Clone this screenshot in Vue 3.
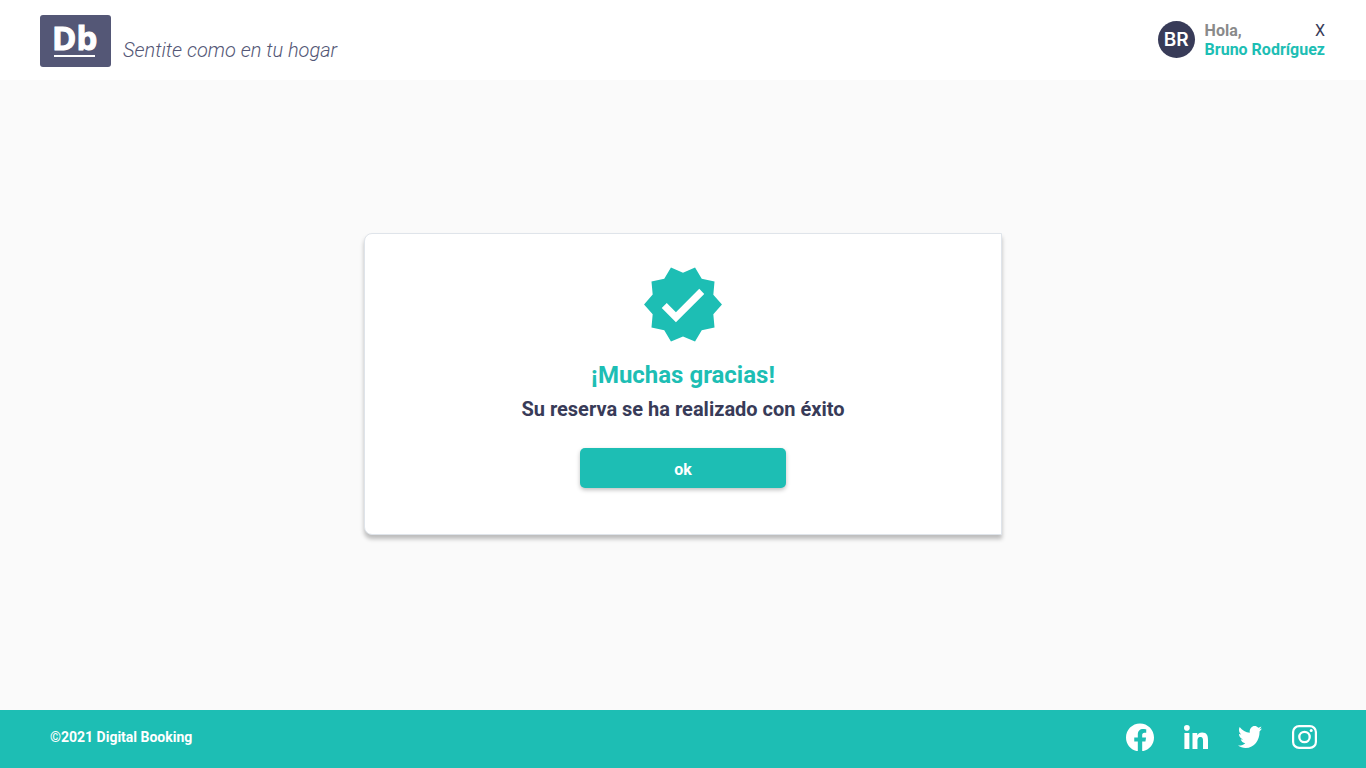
<script setup>
const user = { name: 'Bruno Rodríguez', initials: 'BR' }
</script>

<template>
  <div class="page">
    <header class="header">
      <a class="brand" href="#">
        <svg class="logo" viewBox="0 0 71 52" role="img" aria-label="Digital Booking">
          <rect width="71" height="52" rx="3" fill="#545776" />
          <text x="12" y="35" class="logo-text">Db</text>
          <rect x="14" y="40" width="41" height="2" fill="#fff" />
        </svg>
        <span class="slogan">Sentite como en tu hogar</span>
      </a>
      <div class="user">
        <span class="avatar">{{ user.initials }}</span>
        <div class="greeting">
          <div class="greeting-row">
            <span class="hello">Hola,</span>
            <button class="logout" type="button" aria-label="Cerrar sesión">X</button>
          </div>
          <span class="name">{{ user.name }}</span>
        </div>
      </div>
    </header>

    <main class="main">
      <section class="card">
        <svg class="badge" viewBox="0 0 24 24" aria-hidden="true">
          <path d="M23 12l-2.44-2.78.34-3.68-3.61-.82-1.89-3.18L12 3 8.6 1.54 6.71 4.72l-3.61.81.34 3.68L1 12l2.44 2.78-.34 3.69 3.61.82 1.89 3.18L12 21l3.4 1.46 1.89-3.18 3.61-.82-.34-3.68L23 12zm-13 5l-4-4 1.41-1.41L10 14.17l6.59-6.59L18 9l-8 8z" />
        </svg>
        <h1 class="title">¡Muchas gracias!</h1>
        <p class="message">Su reserva se ha realizado con éxito</p>
        <button class="ok" type="button">ok</button>
      </section>
    </main>

    <footer class="footer">
      <span class="copyright">©2021 Digital Booking</span>
      <nav class="social" aria-label="Redes sociales">
        <a href="#" aria-label="Facebook">
          <svg width="28" height="28" viewBox="8 0 496 496">
            <path d="M504 256C504 119 393 8 256 8S8 119 8 256c0 123.78 90.69 226.38 209.25 245V327.69h-63V256h63v-54.64c0-62.15 37-96.48 93.67-96.48 27.14 0 55.52 4.84 55.52 4.84v61h-31.28c-30.8 0-40.41 19.12-40.41 38.73V256h68.78l-11 71.69h-57.78V501C413.31 482.38 504 379.78 504 256z" />
          </svg>
        </a>
        <a href="#" aria-label="LinkedIn">
          <svg width="24" height="24" viewBox="0 0 448 448">
            <path d="M100.28 448H7.4V148.9h92.88zM53.79 108.1C24.09 108.1 0 83.5 0 53.8a53.79 53.79 0 0 1 107.58 0c0 29.7-24.1 54.3-53.79 54.3zM447.9 448h-92.68V302.4c0-34.7-.7-79.2-48.29-79.2-48.29 0-55.69 37.7-55.69 76.7V448h-92.78V148.9h89.08v40.8h1.3c12.4-23.5 42.69-48.3 87.88-48.3 94 0 111.28 61.9 111.28 142.3V448z" />
          </svg>
        </a>
        <a href="#" aria-label="Twitter">
          <svg width="24" height="22" viewBox="0 48 512 416" preserveAspectRatio="none">
            <path d="M459.37 151.716c.325 4.548.325 9.097.325 13.645 0 138.72-105.583 298.558-298.558 298.558-59.452 0-114.68-17.219-161.137-47.106 8.447.974 16.568 1.299 25.34 1.299 49.055 0 94.213-16.568 130.274-44.832-46.132-.975-84.792-31.188-98.112-72.772 6.498.974 12.995 1.624 19.818 1.624 9.421 0 18.843-1.3 27.614-3.573-48.081-9.747-84.143-51.98-84.143-102.985v-1.299c13.969 7.797 30.214 12.67 47.431 13.319-28.264-18.843-46.781-51.005-46.781-87.391 0-19.492 5.197-37.36 14.294-52.954 51.655 63.675 129.3 105.258 216.365 109.807-1.624-7.797-2.599-15.918-2.599-24.04 0-57.828 46.782-104.934 104.934-104.934 30.213 0 57.502 12.67 76.67 33.137 23.715-4.548 46.456-13.32 66.599-25.34-7.798 24.366-24.366 44.833-46.132 57.827 21.117-2.273 41.584-8.122 60.426-16.243-14.292 20.791-32.161 39.308-52.628 54.253z" />
          </svg>
        </a>
        <a href="#" aria-label="Instagram">
          <svg width="25" height="24" viewBox="0 0 25 24">
            <rect x="1.1" y="1.1" width="22.8" height="21.8" rx="6" fill="none" stroke="#fff" stroke-width="2.2" />
            <circle cx="12.5" cy="12" r="5.2" fill="none" stroke="#fff" stroke-width="2.3" />
            <circle cx="19.2" cy="5.6" r="1.5" />
          </svg>
        </a>
      </nav>
    </footer>
  </div>
</template>

<style>
body {
  margin: 0;
}
</style>

<style scoped>
.page {
  display: flex;
  flex-direction: column;
  min-height: 100vh;
  background: #fafafa;
  color: #383b58;
  font-family: Roboto, "Liberation Sans", sans-serif;
}

button {
  padding: 0;
  border: 0;
  font-family: inherit;
  cursor: pointer;
}

.header {
  display: flex;
  justify-content: space-between;
  box-sizing: border-box;
  height: 80px;
  padding: 15px 41px 0 40px;
  background: #fff;
}

.brand {
  display: flex;
  align-items: flex-start;
  gap: 12px;
  color: #545776;
  text-decoration: none;
}

.logo {
  width: 71px;
  height: 52px;
}

.logo-text {
  fill: #fff;
  stroke: #fff;
  stroke-width: 1px;
  font: 700 33px "Open Sans", sans-serif;
}

.slogan {
  padding-top: 23px;
  font-size: 20px;
  font-style: italic;
  font-weight: 300;
  line-height: 24px;
}

.user {
  display: flex;
  align-items: flex-start;
  gap: 10px;
  padding-top: 6px;
}

.avatar {
  width: 37px;
  height: 37px;
  border-radius: 50%;
  background: #383b58;
  color: #fff;
  font-family: Inter, "Liberation Sans", sans-serif;
  font-size: 19px;
  font-weight: 600;
  line-height: 37px;
  text-align: center;
}

.greeting {
  display: flex;
  flex-direction: column;
  font-size: 16px;
  line-height: 19px;
}

.greeting-row {
  display: flex;
  justify-content: space-between;
}

.hello {
  color: #8a8a8a;
  font-weight: 700;
}

.logout {
  background: none;
  color: #383b58;
  font-size: 16px;
  font-weight: 400;
  line-height: 19px;
}

.name {
  color: #1dbeb4;
  font-weight: 700;
}

.main {
  display: flex;
  flex: 1;
  align-items: center;
  justify-content: center;
  padding-bottom: 22px;
}

.card {
  display: flex;
  flex-direction: column;
  align-items: center;
  box-sizing: border-box;
  width: 638px;
  max-width: 90%;
  padding: 28px 24px 46px;
  border: 1px solid #dfe4ea;
  border-radius: 8px 0 0 8px;
  background: #fff;
  box-shadow: 0 4px 4px rgba(0, 0, 0, 0.25);
}

.badge {
  width: 86px;
  height: 85px;
  fill: #1dbeb4;
}

.title {
  margin: 14px 0 0;
  color: #1dbeb4;
  font-size: 24px;
  font-weight: 700;
  line-height: 28px;
}

.message {
  margin: 8px 0 0;
  font-size: 20px;
  font-weight: 700;
  line-height: 24px;
}

.ok {
  width: 206px;
  height: 40px;
  margin-top: 27px;
  padding-top: 3px;
  border-radius: 5px;
  background: #1dbeb4;
  box-shadow: 0 2px 4px rgba(0, 0, 0, 0.25);
  color: #fff;
  font-size: 16px;
  font-weight: 700;
}

.footer {
  display: flex;
  align-items: center;
  justify-content: space-between;
  box-sizing: border-box;
  height: 58px;
  padding: 0 49px 4px 50px;
  background: #1dbeb4;
  color: #fff;
}

.copyright {
  font-size: 14px;
  font-weight: 700;
}

.social {
  display: flex;
  align-items: center;
  gap: 30px;
}

.social a {
  display: flex;
}

.social svg {
  fill: #fff;
}
</style>
